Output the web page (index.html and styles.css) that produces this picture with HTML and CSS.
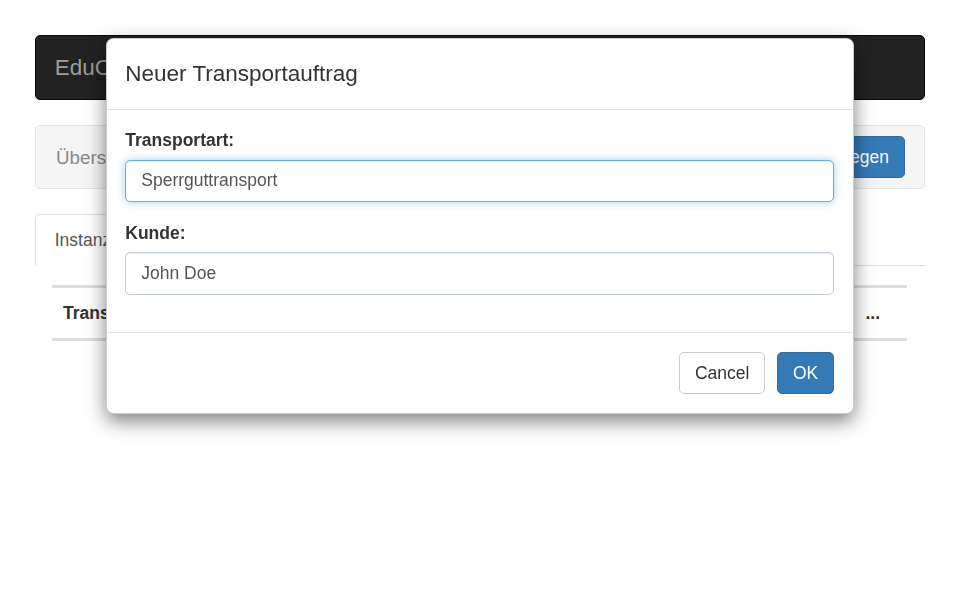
FILE: index.html
```html
<!DOCTYPE html>
<html lang="de">
<head>
<meta charset="utf-8">
<title>EduCargo</title>
<link rel="stylesheet" href="styles.css">
</head>
<body>
<div class="page">
  <nav class="navbar"><span class="brand">EduCargo</span></nav>
  <div class="well">
    <span class="well-title">Übersicht</span>
    <button class="btn btn-primary" type="button">Neuen Auftrag anlegen</button>
  </div>
  <ul class="tabs">
    <li class="tab active">Instanzen</li>
    <li class="tab">Archiv</li>
  </ul>
  <div class="tab-pane">
    <div class="table-head">
      <span class="th">Transportart</span>
      <span class="th">Kunde</span>
      <span class="th th-more">...</span>
    </div>
  </div>
</div>

<div class="modal" role="dialog">
  <div class="modal-header">
    <h4 class="modal-title">Neuer Transportauftrag</h4>
  </div>
  <div class="modal-body">
    <div class="form-group">
      <label class="label">Transportart:</label>
      <input class="input input-focus" type="text" value="Sperrguttransport">
    </div>
    <div class="form-group">
      <label class="label">Kunde:</label>
      <input class="input" type="text" value="John Doe">
    </div>
  </div>
  <div class="modal-footer">
    <button class="btn btn-default" type="button">Cancel</button>
    <button class="btn btn-primary btn-ok" type="button">OK</button>
  </div>
</div>
</body>
</html>
```

FILE: styles.css
```css
* { box-sizing: border-box; }
html, body { margin: 0; padding: 0; background: #fff; }
body {
  font-family: "Liberation Sans", Arial, sans-serif;
  font-size: 17.5px;
  line-height: 25px;
  color: #333;
}
.page {
  padding: 35px 35px 0 35px;
}
.navbar {
  height: 65px;
  background: #222;
  border: 1px solid #080808;
  border-radius: 5px;
  display: flex;
  align-items: center;
  margin-bottom: 25px;
}
.brand {
  padding: 0 18.75px;
  font-size: 22.5px;
  line-height: 25px;
  color: #9d9d9d;
}
.well {
  height: 64px;
  background: #f5f5f5;
  border: 1px solid #e3e3e3;
  border-radius: 5px;
  padding: 10px 19px 10px 20px;
  display: flex;
  align-items: center;
  justify-content: space-between;
  margin-bottom: 25px;
}
.well-title {
  font-size: 18.75px;
  color: #888;
}
.btn {
  font-family: inherit;
  font-size: 17.5px;
  line-height: 25px;
  height: 42.5px;
  padding: 7.5px 15px;
  border-radius: 5px;
  border: 1px solid transparent;
  cursor: pointer;
}
.btn-primary {
  background: #337ab7;
  border-color: #2e6da4;
  color: #fff;
}
.btn-default {
  background: #fff;
  border-color: #ccc;
  color: #333;
}
.tabs {
  list-style: none;
  margin: 0;
  padding: 0;
  display: flex;
  border-bottom: 1px solid #ddd;
  height: 52px;
}
.tab {
  padding: 12.5px 18.75px;
  border: 1px solid transparent;
  border-radius: 5px 5px 0 0;
  margin-bottom: -1px;
  color: #337ab7;
}
.tab.active {
  color: #555;
  background: #fff;
  border-color: #ddd;
  border-bottom-color: #fff;
}
.tab-pane {
  padding: 19px 18px 0 17px;
}
.table-head {
  display: flex;
  align-items: center;
  height: 56px;
  border-top: 3px solid #ddd;
  border-bottom: 3px solid #ddd;
  padding: 0 27px 0 11px;
  font-weight: bold;
  color: #333;
}
.th { flex: 1; }
.th-more { flex: 0 0 auto; }

.modal {
  position: fixed;
  top: 38px;
  left: 105.5px;
  width: 748.5px;
  background: #fff;
  border: 1px solid rgba(0,0,0,0.2);
  border-radius: 7.5px;
  box-shadow: 0 6.25px 18.75px rgba(0,0,0,0.5);
}
.modal-header {
  padding: 18.75px;
  border-bottom: 1px solid #e5e5e5;
}
.modal-title {
  margin: 0;
  font-size: 22.5px;
  font-weight: normal;
  line-height: 32.14px;
  color: #333;
}
.modal-body {
  padding: 18.75px;
}
.form-group {
  margin-bottom: 18.75px;
}
.label {
  display: block;
  font-weight: bold;
  margin-bottom: 6.25px;
  color: #333;
}
.input {
  display: block;
  width: 100%;
  height: 42.5px;
  padding: 7.5px 15px;
  font-family: inherit;
  font-size: 17.5px;
  line-height: 25px;
  color: #555;
  background: #fff;
  border: 1px solid #bfcbd9;
  border-radius: 5px;
  box-shadow: inset 0 1px 1px rgba(0,0,0,0.075);
  outline: none;
}
.input-focus {
  border-color: #66afe9;
  box-shadow: inset 0 1px 1px rgba(0,0,0,0.075), 0 0 8px rgba(102,175,233,0.6);
}
.modal-footer {
  padding: 18.75px;
  border-top: 1px solid #e5e5e5;
  display: flex;
  justify-content: flex-end;
  gap: 11.5px;
}
```
